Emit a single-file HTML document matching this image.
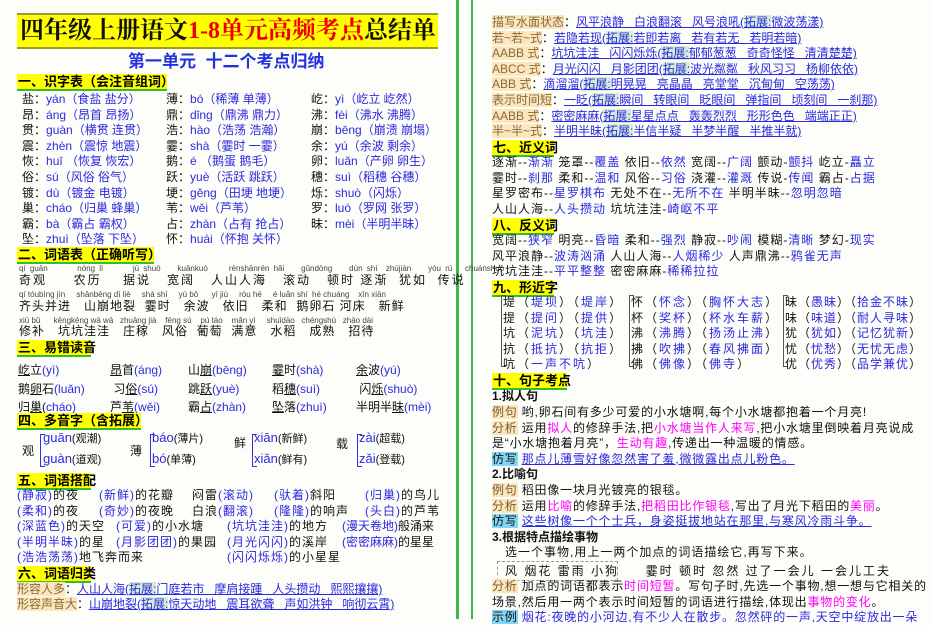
<!DOCTYPE html><html><head><meta charset="utf-8"><style>
*{margin:0;padding:0;box-sizing:border-box}
body{width:931px;height:619px;overflow:hidden;background:#fdfdf9;font-family:"Liberation Sans","Noto Sans CJK SC",sans-serif;font-size:12px;color:#111;position:relative}
.l{position:absolute;white-space:nowrap;line-height:14px}
.b{color:#2a2ae0}.p{color:#f0f}.r{color:#e00}
.h{position:absolute;background:#ffff00;border-bottom:2px solid #33bb33;font-weight:bold;font-size:13px;line-height:15px;padding-left:1px;white-space:nowrap;color:#000}
.tan{background:#fbe6bd;color:#8a6a3a}.cy{background:#7fd6f5}
.u{text-decoration:underline;color:#2a2ae0}
.g{background:#d6ebd6}
.br{position:absolute;border:1px solid #3333cc;border-right:none;width:5px}
</style></head><body>
<div style="position:absolute;left:456px;top:0;width:3px;height:619px;background:#3cb94a"></div>
<div style="position:absolute;left:471px;top:0;width:2px;height:619px;background:#3cb94a"></div>
<div style="position:absolute;left:17px;top:13px;width:421px;height:36px;background:#ffff00;border-top:2px solid #9a9a30;border-bottom:2px solid #9a9a30;font-size:24px;font-weight:bold;line-height:32px;padding-left:3px;white-space:nowrap;font-family:'Liberation Serif','Noto Serif CJK SC',serif">四年级上册语文<span class="r">1-8单元高频考点</span>总结单</div>
<div class="l" style="left:128px;top:53px;font-size:17px;line-height:18px;font-weight:bold;color:#2233dd">第一单元&nbsp;&nbsp;十二个考点归纳</div>
<div class="h" style="left:17px;top:74px;width:150px">一、识字表（会注音组词）</div>
<div class="l" style="left:22px;top:92px;line-height:15.6px">盐：<span class="b">yán（食盐 盐分）</span><br>昂：<span class="b">áng（昂首 昂扬）</span><br>贯：<span class="b">guàn（横贯 连贯）</span><br>震：<span class="b">zhèn（震惊 地震）</span><br>恢：<span class="b">huī （恢复 恢宏）</span><br>俗：<span class="b">sú（风俗 俗气）</span><br>镀：<span class="b">dù（镀金 电镀）</span><br>巢：<span class="b">cháo（归巢 蜂巢）</span><br>霸：<span class="b">bà（霸占 霸权）</span><br>坠：<span class="b">zhuì（坠落 下坠）</span></div>
<div class="l" style="left:166px;top:92px;line-height:15.6px">薄：<span class="b">bó（稀薄 单薄）</span><br>鼎：<span class="b">dǐng（鼎沸 鼎力）</span><br>浩：<span class="b">hào（浩荡 浩瀚）</span><br>霎：<span class="b">shà（霎时 一霎）</span><br>鹅：<span class="b">é （鹅蛋 鹅毛）</span><br>跃：<span class="b">yuè（活跃 跳跃）</span><br>埂：<span class="b">gěng（田埂 地埂）</span><br>苇：<span class="b">wěi（芦苇）</span><br>占：<span class="b">zhàn（占有 抢占）</span><br>怀：<span class="b">huái（怀抱 关怀）</span></div>
<div class="l" style="left:311px;top:92px;line-height:15.6px">屹：<span class="b">yì（屹立 屹然）</span><br>沸：<span class="b">fèi（沸水 沸腾）</span><br>崩：<span class="b">bēng（崩溃 崩塌）</span><br>余：<span class="b">yú（余波 剩余）</span><br>卵：<span class="b">luǎn（产卵 卵生）</span><br>穗：<span class="b">suì（稻穗 谷穗）</span><br>烁：<span class="b">shuò（闪烁）</span><br>罗：<span class="b">luó（罗网 张罗）</span><br>昧：<span class="b">mèi（半明半昧）</span></div>
<div class="h" style="left:17px;top:247px;width:137px">二、词语表（正确听写）</div>
<div class="l" style="left:19px;top:264px;font-size:8px;line-height:9px;color:#444;word-spacing:2px">qí guān &nbsp;&nbsp;&nbsp;&nbsp;&nbsp;&nbsp;nóng lì &nbsp;&nbsp;&nbsp;&nbsp;&nbsp;&nbsp;jù shuō &nbsp;&nbsp;&nbsp;kuānkuò &nbsp;&nbsp;&nbsp;&nbsp;rénshānrén hǎi &nbsp;&nbsp;&nbsp;gǔndòng &nbsp;&nbsp;&nbsp;dùn shí &nbsp;zhújiàn &nbsp;&nbsp;&nbsp;yóu rú &nbsp;&nbsp;chuánshuō</div>
<div class="l" style="left:19px;top:273px;letter-spacing:2px">奇观 &nbsp;&nbsp;&nbsp;&nbsp;农历 &nbsp;&nbsp;&nbsp;据说 &nbsp;&nbsp;宽阔 &nbsp;&nbsp;人山人海 &nbsp;&nbsp;滚动 &nbsp;&nbsp;顿时 逐渐 &nbsp;犹如 &nbsp;传说</div>
<div class="l" style="left:19px;top:290px;font-size:8px;line-height:9px;color:#444">qí tóubìng jìn &nbsp;&nbsp;&nbsp;&nbsp;shānbēng dì liè &nbsp;&nbsp;&nbsp;&nbsp;shà shí &nbsp;&nbsp;&nbsp;&nbsp;yú bō &nbsp;&nbsp;&nbsp;&nbsp;&nbsp;yī jiù &nbsp;&nbsp;&nbsp;&nbsp;róu hé &nbsp;&nbsp;&nbsp;&nbsp;é luǎn shí &nbsp;hé chuáng &nbsp;&nbsp;&nbsp;xīn xiān</div>
<div class="l" style="left:19px;top:299px;letter-spacing:1px">齐头并进 &nbsp;&nbsp;山崩地裂 &nbsp;霎时 &nbsp;&nbsp;余波 &nbsp;&nbsp;依旧 &nbsp;&nbsp;柔和 &nbsp;鹅卵石 河床 &nbsp;&nbsp;新鲜</div>
<div class="l" style="left:19px;top:316px;font-size:8px;line-height:9px;color:#444">xiū bǔ &nbsp;&nbsp;&nbsp;&nbsp;&nbsp;kēngkēng wā wā &nbsp;&nbsp;zhuāng jià &nbsp;&nbsp;&nbsp;fēng sú &nbsp;&nbsp;&nbsp;pú táo &nbsp;&nbsp;&nbsp;mǎn yì &nbsp;&nbsp;&nbsp;&nbsp;shuǐdào &nbsp;&nbsp;chéngshú &nbsp;&nbsp;zhāo dài</div>
<div class="l" style="left:19px;top:324px;letter-spacing:1px">修补 &nbsp;&nbsp;坑坑洼洼 &nbsp;&nbsp;庄稼 &nbsp;&nbsp;风俗 &nbsp;葡萄 &nbsp;满意 &nbsp;&nbsp;水稻 &nbsp;&nbsp;成熟 &nbsp;&nbsp;招待</div>
<div class="h" style="left:17px;top:340px;width:74px">三、易错读音</div>
<div class="l" style="left:18px;top:361px;line-height:18.5px"><u>屹</u>立<span class="b">(yì)</span><br>鹅<u>卵</u>石<span class="b">(luǎn)</span><br>归<u>巢</u>(<span class="b">cháo)</span></div>
<div class="l" style="left:110px;top:361px;line-height:18.5px"><u>昂</u>首<span class="b">(áng)</span><br>&nbsp;习<u>俗</u><span class="b">(sú)</span><br>芦<u>苇</u><span class="b">(wěi)</span></div>
<div class="l" style="left:188px;top:361px;line-height:18.5px">山<u>崩</u><span class="b">(bēng)</span><br>跳<u>跃</u><span class="b">(yuè)</span><br>霸<u>占</u><span class="b">(zhàn)</span></div>
<div class="l" style="left:272px;top:361px;line-height:18.5px"><u>霎</u>时<span class="b">(shà)</span><br>稻<u>穗</u><span class="b">(suì)</span><br><u>坠</u>落<span class="b">(zhuì)</span></div>
<div class="l" style="left:356px;top:361px;line-height:18.5px"><u>余</u>波<span class="b">(yú)</span><br>&nbsp;闪<u>烁</u><span class="b">(shuò)</span><br>半明半<u>昧</u><span class="b">(mèi)</span></div>
<div class="h" style="left:17px;top:413px;width:124px">四、多音字（含拓展）</div>
<div class="l" style="left:22px;top:444px">观</div><div class="br" style="left:40px;top:434px;height:33px"></div><div class="l b" style="left:43px;top:431px;font-size:13px">guān<span style="color:#111;font-size:11px">(观潮)</span></div><div class="l b" style="left:43px;top:452px;font-size:13px">guàn<span style="color:#111;font-size:11px">(道观)</span></div>
<div class="l" style="left:130px;top:444px">薄</div><div class="br" style="left:150px;top:434px;height:33px"></div><div class="l b" style="left:152px;top:431px;font-size:13px">báo<span style="color:#111;font-size:11px">(薄片)</span></div><div class="l b" style="left:152px;top:452px;font-size:13px">bó<span style="color:#111;font-size:11px">(单薄)</span></div>
<div class="l" style="left:234px;top:436px">鲜</div><div class="br" style="left:252px;top:434px;height:33px"></div><div class="l b" style="left:254px;top:431px;font-size:13px">xiān<span style="color:#111;font-size:11px">(新鲜)</span></div><div class="l b" style="left:254px;top:452px;font-size:13px">xiǎn<span style="color:#111;font-size:11px">(鲜有)</span></div>
<div class="l" style="left:336px;top:437px">载</div><div class="br" style="left:357px;top:434px;height:33px"></div><div class="l b" style="left:359px;top:431px;font-size:13px">zài<span style="color:#111;font-size:11px">(超载)</span></div><div class="l b" style="left:359px;top:452px;font-size:13px">zǎi<span style="color:#111;font-size:11px">(登载)</span></div>
<div class="h" style="left:17px;top:473px;width:74px">五、词语搭配</div>
<div class="l" style="left:17px;top:488px;line-height:15.5px;letter-spacing:1px"><span class="b">(静寂)</span>的夜<br><span class="b">(柔和)</span>的夜<br><span class="b">(深蓝色)</span>的天空<br><span class="b">(半明半昧)</span>的星<br><span class="b">(浩浩荡荡)</span>地飞奔而来</div>
<div class="l" style="left:99px;top:488px;line-height:15.5px;letter-spacing:1px"><span class="b">(新鲜)</span>的花瓣<br><span class="b">(奇妙)</span>的夜晚</div>
<div class="l" style="left:116px;top:519px;line-height:15.5px;letter-spacing:1px"><span class="b">(可爱)</span>的小水塘<br><span class="b">(月影团团)</span>的果园</div>
<div class="l" style="left:192px;top:488px;line-height:15.5px;letter-spacing:1px">闷雷<span class="b">(滚动)</span><br>白浪<span class="b">(翻滚)</span></div>
<div class="l" style="left:227px;top:519px;line-height:15.5px;letter-spacing:1px"><span class="b">(坑坑洼洼)</span>的地方<br><span class="b">(月光闪闪)</span>的溪岸<br><span class="b">(闪闪烁烁)</span>的小星星</div>
<div class="l" style="left:274px;top:488px;line-height:15.5px;letter-spacing:1px"><span class="b">(驮着)</span>斜阳<br><span class="b">(隆隆)</span>的响声</div>
<div class="l" style="left:342px;top:519px;line-height:15.5px;letter-spacing:0px"><span class="b">(漫天卷地)</span>般涌来<br><span class="b">(密密麻麻)</span>的星星</div>
<div class="l" style="left:365px;top:488px;line-height:15.5px;letter-spacing:1px"><span class="b">(归巢)</span>的鸟儿<br><span class="b">(头白)</span>的芦苇</div>
<div class="h" style="left:17px;top:566px;width:74px">六、词语归类</div>
<div class="l" style="left:17px;top:582px;line-height:15px"><span class="tan">形容人多</span>：<span class="u">人山人海(<span class="g">拓展:</span>门庭若市 &nbsp;&nbsp;摩肩接踵 &nbsp;&nbsp;人头攒动 &nbsp;&nbsp;熙熙攘攘)</span><br><span class="tan">形容声音大</span>：<span class="u">山崩地裂(<span class="g">拓展:</span>惊天动地 &nbsp;&nbsp;震耳欲聋 &nbsp;&nbsp;声如洪钟 &nbsp;&nbsp;响彻云霄)</span></div>
<div class="l" style="left:492px;top:15px;line-height:15.6px"><span class="tan">描写水面状态</span>：<span class="u">风平浪静 &nbsp;&nbsp;白浪翻滚 &nbsp;&nbsp;风号浪吼(<span class="g">拓展:</span>微波荡漾)</span><br><span class="tan">若~若~式</span>：<span class="u">若隐若现(<span class="g">拓展:</span>若即若离 &nbsp;&nbsp;若有若无 &nbsp;&nbsp;若明若暗)</span><br><span class="tan">AABB 式</span>：<span class="u">坑坑洼洼 &nbsp;&nbsp;闪闪烁烁(<span class="g">拓展:</span>郁郁葱葱 &nbsp;&nbsp;奇奇怪怪 &nbsp;&nbsp;清清楚楚)</span><br><span class="tan">ABCC 式</span>：<span class="u">月光闪闪 &nbsp;&nbsp;月影团团(<span class="g">拓展:</span>波光粼粼 &nbsp;&nbsp;秋风习习 &nbsp;&nbsp;杨柳依依)</span><br><span class="tan">ABB 式</span>：<span class="u">滴溜溜(<span class="g">拓展:</span>明晃晃 &nbsp;&nbsp;亮晶晶 &nbsp;&nbsp;亮堂堂 &nbsp;&nbsp;沉甸甸 &nbsp;&nbsp;空荡荡)</span><br><span class="tan">表示时间短</span>：<span class="u">一眨(<span class="g">拓展:</span>瞬间 &nbsp;&nbsp;转眼间 &nbsp;&nbsp;眨眼间 &nbsp;&nbsp;弹指间 &nbsp;&nbsp;顷刻间 &nbsp;&nbsp;一刹那)</span><br><span class="tan">AABB 式</span>：<span class="u">密密麻麻(<span class="g">拓展:</span>星星点点 &nbsp;&nbsp;轰轰烈烈 &nbsp;&nbsp;形形色色 &nbsp;&nbsp;端端正正)</span><br><span class="tan">半~半~式</span>：<span class="u">半明半昧(<span class="g">拓展:</span>半信半疑 &nbsp;&nbsp;半梦半醒 &nbsp;&nbsp;半推半就)</span></div>
<div class="h" style="left:492px;top:140px;width:62px">七、近义词</div>
<div class="l" style="left:492px;top:155px;line-height:15.5px;letter-spacing:1px">逐渐--<span class="b">渐渐</span> 笼罩--<span class="b">覆盖</span> 依旧--<span class="b">依然</span> 宽阔--<span class="b">广阔</span> 颤动-<span class="b">颤抖</span> 屹立-<span class="b">矗立</span><br>霎时--<span class="b">刹那</span> 柔和--<span class="b">温和</span> 风俗--<span class="b">习俗</span> 浇灌--<span class="b">灌溉</span> 传说-<span class="b">传闻</span> 霸占-<span class="b">占据</span><br>星罗密布--<span class="b">星罗棋布</span> 无处不在--<span class="b">无所不在</span> 半明半昧--<span class="b">忽明忽暗</span><br>人山人海--<span class="b">人头攒动</span> 坑坑洼洼-<span class="b">崎岖不平</span></div>
<div class="h" style="left:492px;top:218px;width:62px">八、反义词</div>
<div class="l" style="left:492px;top:233px;line-height:15.5px;letter-spacing:1px">宽阔--<span class="b">狭窄</span> 明亮--<span class="b">昏暗</span> 柔和--<span class="b">强烈</span> 静寂--<span class="b">吵闹</span> 模糊-<span class="b">清晰</span> 梦幻-<span class="b">现实</span><br>风平浪静--<span class="b">波涛汹涌</span> 人山人海--<span class="b">人烟稀少</span> 人声鼎沸--<span class="b">鸦雀无声</span><br>坑坑洼洼--<span class="b">平平整整</span> 密密麻麻-<span class="b">稀稀拉拉</span></div>
<div class="h" style="left:492px;top:280px;width:62px">九、形近字</div>
<div class="br" style="left:501px;top:295px;height:72px;border-color:#555"></div>
<div class="l" style="left:503px;top:295px;line-height:15.6px;letter-spacing:2px">堤（<span class="b">堤坝</span>）（<span class="b">堤岸</span>）<br>提（<span class="b">提问</span>）（<span class="b">提供</span>）<br>坑（<span class="b">泥坑</span>）（<span class="b">坑洼</span>）<br>抗（<span class="b">抵抗</span>）（<span class="b">抗拒</span>）<br>吭（<span class="b">一声不吭</span>）</div>
<div class="br" style="left:629px;top:295px;height:72px;border-color:#555"></div>
<div class="l" style="left:631px;top:295px;line-height:15.6px;letter-spacing:2px">怀（<span class="b">怀念</span>）（<span class="b">胸怀大志</span>）<br>杯（<span class="b">奖杯</span>）（<span class="b">杯水车薪</span>）<br>沸（<span class="b">沸腾</span>）（<span class="b">扬汤止沸</span>）<br>拂（<span class="b">吹拂</span>）（<span class="b">春风拂面</span>）<br>佛（<span class="b">佛像</span>）（<span class="b">佛寺</span>）</div>
<div class="br" style="left:783px;top:295px;height:72px;border-color:#555"></div>
<div class="l" style="left:785px;top:295px;line-height:15.6px;letter-spacing:1px">昧（<span class="b">愚昧</span>）（<span class="b">拾金不昧</span>）<br>味（<span class="b">味道</span>）（<span class="b">耐人寻味</span>）<br>犹（<span class="b">犹如</span>）（<span class="b">记忆犹新</span>）<br>忧（<span class="b">忧愁</span>）（<span class="b">无忧无虑</span>）<br>优（<span class="b">优秀</span>）（<span class="b">品学兼优</span>）</div>
<div class="h" style="left:492px;top:373px;width:75px">十、句子考点</div>
<div class="l" style="left:492px;top:389px;font-weight:bold">1.拟人句</div>
<div class="l" style="left:492px;top:405px;line-height:15.6px;letter-spacing:0.8px"><span class="tan" style="color:#7a5a2a">例句</span> 哟,卵石间有多少可爱的小水塘啊,每个小水塘都抱着一个月亮!<br><span class="tan" style="color:#7a5a2a">分析</span> 运用<span class="p">拟人</span>的修辞手法,把<span class="p">小水塘当作人来写</span>,把小水塘里倒映着月亮说成<br>是“小水塘抱着月亮”，<span class="p">生动有趣</span>,传递出一种温暖的情感。<br><span class="cy">仿写</span> <span class="u">那点儿薄雪好像忽然害了羞,微微露出点儿粉色。</span></div>
<div class="l" style="left:492px;top:467px;font-weight:bold">2.比喻句</div>
<div class="l" style="left:492px;top:483px;line-height:15.6px;letter-spacing:0.8px"><span class="tan" style="color:#7a5a2a">例句</span> 稻田像一块月光镀亮的银毯。<br><span class="tan" style="color:#7a5a2a">分析</span> 运用<span class="p">比喻</span>的修辞手法,<span class="p">把稻田比作银毯</span>,写出了月光下稻田的<span class="p">美丽</span>。<br><span class="cy">仿写</span> <span class="u">这些树像一个个士兵，身姿挺拔地站在那里,与寒风冷雨斗争。</span></div>
<div class="l" style="left:492px;top:530px;font-weight:bold">3.根据特点描绘事物</div>
<div class="l" style="left:505px;top:545px;letter-spacing:1px">选一个事物,用上一两个加点的词语描绘它,再写下来。</div>
<div style="position:absolute;left:497px;top:561px;width:121px;height:20px;border:1px dashed #999"></div>
<div class="l" style="left:505px;top:564px;letter-spacing:2px">风 烟花 雷雨 小狗 &nbsp;&nbsp;&nbsp;&nbsp;霎时 顿时 忽然 过了一会儿 一会儿工夫</div>
<div class="l" style="left:492px;top:579px;line-height:15.6px;letter-spacing:0.8px"><span class="tan" style="color:#7a5a2a">分析</span> 加点的词语都表示<span class="p">时间短暂</span>。写句子时,先选一个事物,想一想与它相关的<br>场景,然后用一两个表示时间短暂的词语进行描绘,体现出<span class="p">事物的变化</span>。<br><span class="cy">示例</span> <span class="b">烟花:夜晚的小河边,有不少人在散步。忽然砰的一声,天空中绽放出一朵</span></div>
</body></html>
